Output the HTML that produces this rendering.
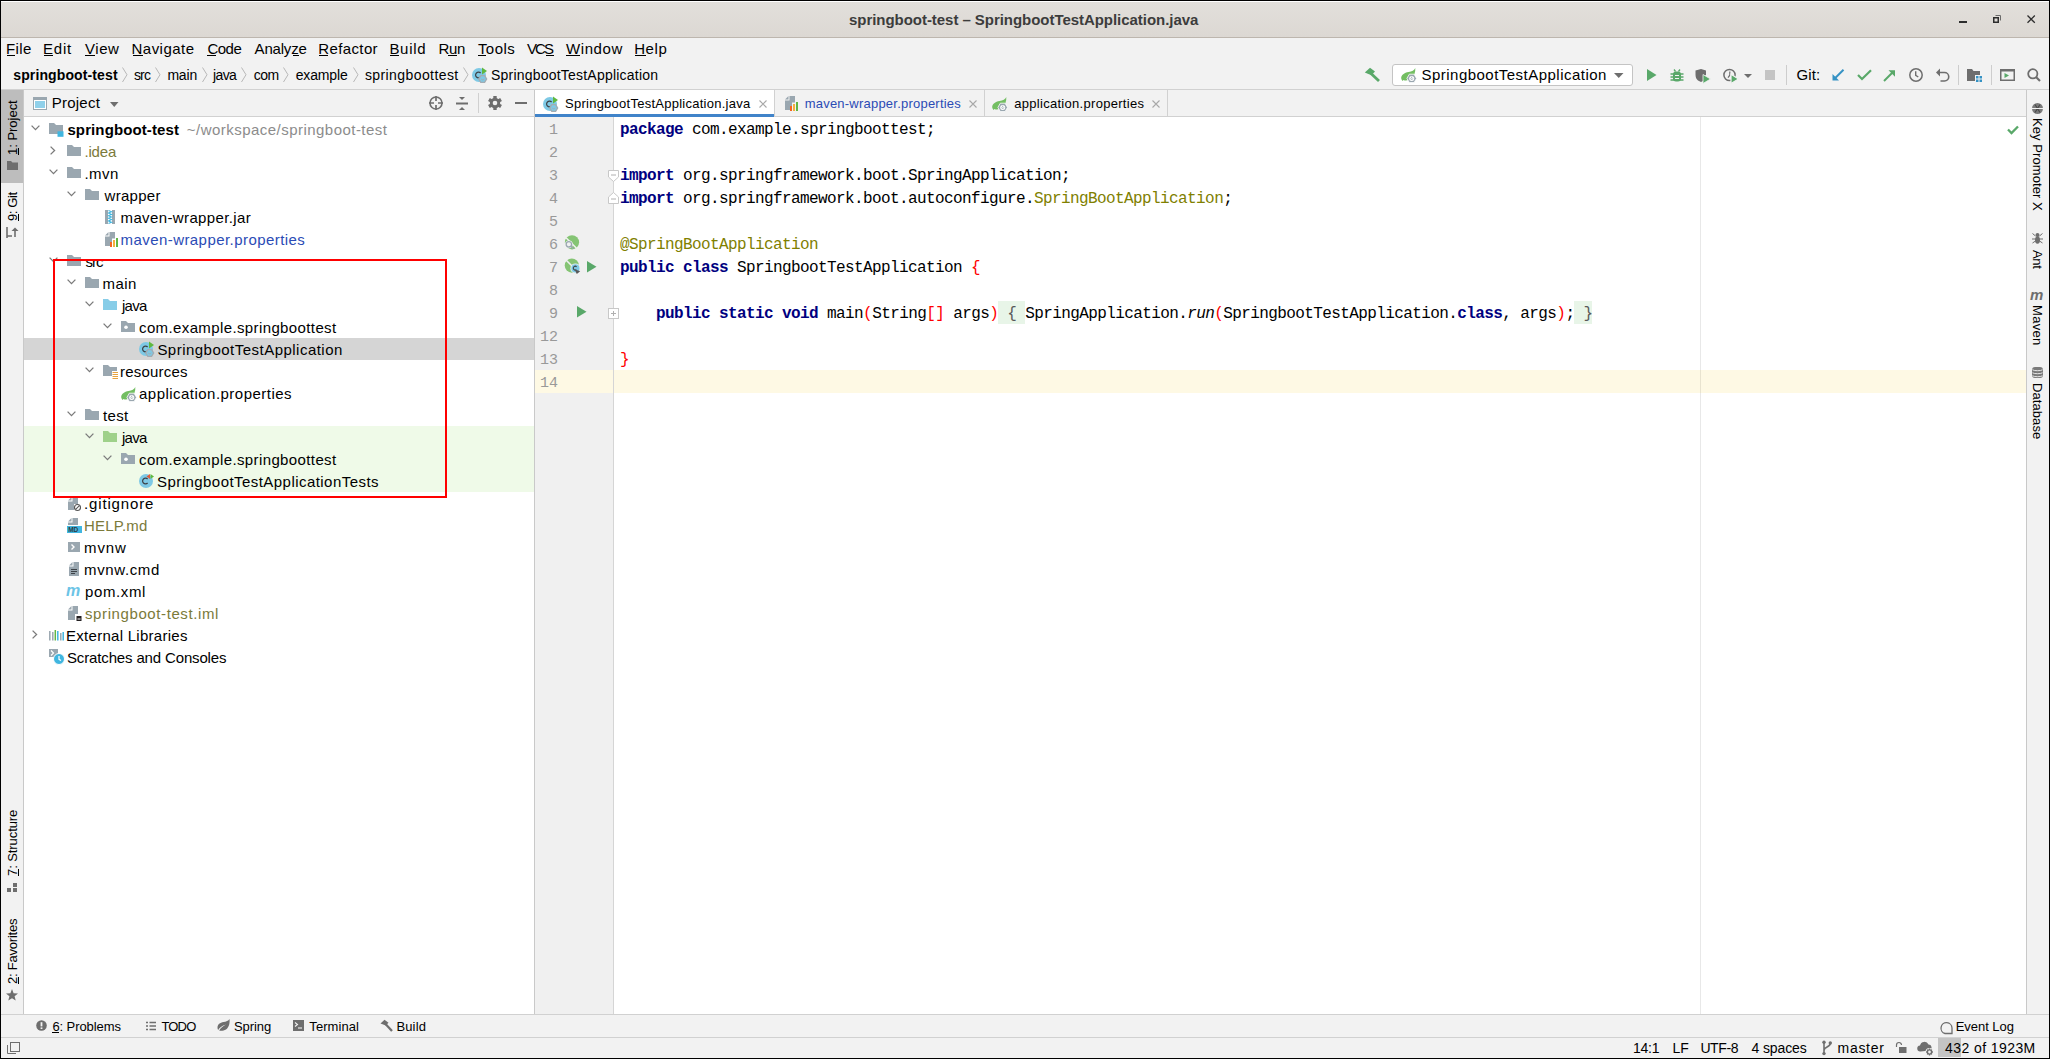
<!DOCTYPE html><html><head><meta charset="utf-8"><style>
html,body{margin:0;padding:0;width:2050px;height:1059px;overflow:hidden;background:#000}
body{position:relative;font-family:"Liberation Sans",sans-serif;}
.r{position:absolute}
.code{position:absolute;white-space:pre;font:16px/1 "Liberation Mono",monospace;letter-spacing:-0.6px;color:#000}
.code b{font-weight:bold}
.t{position:absolute;white-space:pre;line-height:1;font-family:"Liberation Sans",sans-serif;color:#000}
svg{position:absolute;overflow:visible}
</style></head><body>
<div class="r" style="left:0px;top:0px;width:2050px;height:1059px;background:#000;"></div>
<div class="r" style="left:1px;top:1px;width:2048px;height:1px;background:#ffffff;"></div>
<div class="r" style="left:1px;top:2px;width:2048px;height:35px;background:linear-gradient(#e2dfdb,#dcd8d3);"></div>
<div class="r" style="left:1px;top:37px;width:2048px;height:1px;background:#bdb6ae;"></div>
<div class="r" style="left:1px;top:38px;width:2048px;height:52px;background:#f2f2f2;"></div>
<div class="r" style="left:1px;top:89px;width:2048px;height:1px;background:#d1d1d1;"></div>
<div class="r" style="left:1px;top:90px;width:22px;height:925px;background:#f2f2f2;"></div>
<div class="r" style="left:1px;top:90px;width:22px;height:93px;background:#bdbdbd;"></div>
<div class="r" style="left:23px;top:90px;width:1px;height:925px;background:#c9c9c9;"></div>
<div class="r" style="left:24px;top:90px;width:510px;height:26px;background:#f2f2f2;"></div>
<div class="r" style="left:24px;top:116px;width:510px;height:1px;background:#d1d1d1;"></div>
<div class="r" style="left:24px;top:117px;width:510px;height:897px;background:#ffffff;"></div>
<div class="r" style="left:534px;top:90px;width:1px;height:925px;background:#c9c9c9;"></div>
<div class="r" style="left:535px;top:90px;width:1491px;height:26px;background:#f2f2f2;"></div>
<div class="r" style="left:535px;top:116px;width:1491px;height:1px;background:#d1d1d1;"></div>
<div class="r" style="left:535px;top:90px;width:239px;height:26px;background:#ffffff;"></div>
<div class="r" style="left:535px;top:114px;width:239px;height:3px;background:#4083c9;"></div>
<div class="r" style="left:774px;top:90px;width:1px;height:26px;background:#d1d1d1;"></div>
<div class="r" style="left:984px;top:90px;width:1px;height:26px;background:#d1d1d1;"></div>
<div class="r" style="left:1167px;top:90px;width:1px;height:26px;background:#d1d1d1;"></div>
<div class="r" style="left:535px;top:117px;width:1491px;height:897px;background:#ffffff;"></div>
<div class="r" style="left:535px;top:117px;width:78px;height:897px;background:#f0f0f0;"></div>
<div class="r" style="left:613px;top:117px;width:1px;height:897px;background:#d5d5d5;"></div>
<div class="r" style="left:1700px;top:117px;width:1px;height:897px;background:#e8e8e8;"></div>
<div class="r" style="left:2026px;top:90px;width:1px;height:925px;background:#c9c9c9;"></div>
<div class="r" style="left:2027px;top:90px;width:22px;height:925px;background:#f2f2f2;"></div>
<div class="r" style="left:1px;top:1014px;width:2048px;height:1px;background:#d1d1d1;"></div>
<div class="r" style="left:1px;top:1015px;width:2048px;height:22px;background:#f2f2f2;"></div>
<div class="r" style="left:1px;top:1037px;width:2048px;height:1px;background:#d1d1d1;"></div>
<div class="r" style="left:1px;top:1038px;width:2048px;height:20px;background:#f2f2f2;"></div>
<div class="r" style="left:1938px;top:1038px;width:23px;height:19px;background:#c4c4c4;"></div>
<div class="r" style="left:24px;top:338px;width:510px;height:22px;background:#d5d5d5;"></div>
<div class="r" style="left:24px;top:426px;width:510px;height:66px;background:#effae8;"></div>
<div class="r" style="left:535px;top:370px;width:78px;height:23px;background:#fef9e4;"></div>
<div class="r" style="left:614px;top:370px;width:1412px;height:23px;background:#fef9e4;"></div>
<div class="r" style="left:1700px;top:370px;width:1px;height:23px;background:#e8e3cf;"></div>
<svg style="left:31px;top:125px;" width="9" height="6" viewBox="0 0 9 6"><path d="M0.6 0.6L4.5 4.6L8.4 0.6" fill="none" stroke="#7a7a7a" stroke-width="1.3"/></svg>
<svg style="left:49px;top:123px;" width="14" height="11" viewBox="0 0 14 11"><path d="M0 0H5L7 2H14V11H0Z" fill="#9aa7b0"/></svg>
<svg style="left:49px;top:123px;" width="16" height="14" viewBox="0 0 16 14"><path d="M0 0H4.5L6.5 2H14V8H8V11H0Z" fill="#9aa7b0"/><rect x="8.5" y="8.3" width="6" height="5.5" fill="#40b6e0"/></svg>
<svg style="left:50px;top:146px;" width="6" height="9" viewBox="0 0 6 9"><path d="M0.6 0.6L4.6 4.5L0.6 8.4" fill="none" stroke="#7a7a7a" stroke-width="1.3"/></svg>
<svg style="left:67px;top:145px;" width="14" height="11" viewBox="0 0 14 11"><path d="M0 0H5L7 2H14V11H0Z" fill="#9aa7b0"/></svg>
<svg style="left:49px;top:169px;" width="9" height="6" viewBox="0 0 9 6"><path d="M0.6 0.6L4.5 4.6L8.4 0.6" fill="none" stroke="#7a7a7a" stroke-width="1.3"/></svg>
<svg style="left:67px;top:167px;" width="14" height="11" viewBox="0 0 14 11"><path d="M0 0H5L7 2H14V11H0Z" fill="#9aa7b0"/></svg>
<svg style="left:67px;top:191px;" width="9" height="6" viewBox="0 0 9 6"><path d="M0.6 0.6L4.5 4.6L8.4 0.6" fill="none" stroke="#7a7a7a" stroke-width="1.3"/></svg>
<svg style="left:85px;top:189px;" width="14" height="11" viewBox="0 0 14 11"><path d="M0 0H5L7 2H14V11H0Z" fill="#9aa7b0"/></svg>
<svg style="left:105px;top:210px;" width="10" height="14" viewBox="0 0 10 14"><rect x="0" y="0" width="3" height="14" fill="#9aa7b0"/><rect x="7" y="0" width="3" height="14" fill="#9aa7b0"/><path d="M3.5 0.5L6.5 1.8L3.5 3.1L6.5 4.4L3.5 5.7L6.5 7L3.5 8.3L6.5 9.6L3.5 10.9L6.5 12.2L3.5 13.5" fill="none" stroke="#40b6e0" stroke-width="1.1"/></svg>
<svg style="left:105px;top:232px;" width="14" height="15" viewBox="0 0 14 15"><path d="M0 3.5L3.5 0V3.5Z" fill="#9aa7b0"/><path d="M4.5 0H10V6.5H7V14H0V4.5H4.5Z" fill="#9aa7b0"/><rect x="5" y="10" width="2" height="5" fill="#f26522"/><rect x="8" y="8" width="2" height="7" fill="#f4af3d"/><rect x="11" y="6" width="2" height="9" fill="#62b543"/></svg>
<svg style="left:49px;top:257px;" width="9" height="6" viewBox="0 0 9 6"><path d="M0.6 0.6L4.5 4.6L8.4 0.6" fill="none" stroke="#7a7a7a" stroke-width="1.3"/></svg>
<svg style="left:67px;top:255px;" width="14" height="11" viewBox="0 0 14 11"><path d="M0 0H5L7 2H14V11H0Z" fill="#9aa7b0"/></svg>
<svg style="left:67px;top:279px;" width="9" height="6" viewBox="0 0 9 6"><path d="M0.6 0.6L4.5 4.6L8.4 0.6" fill="none" stroke="#7a7a7a" stroke-width="1.3"/></svg>
<svg style="left:85px;top:277px;" width="14" height="11" viewBox="0 0 14 11"><path d="M0 0H5L7 2H14V11H0Z" fill="#9aa7b0"/></svg>
<svg style="left:85px;top:301px;" width="9" height="6" viewBox="0 0 9 6"><path d="M0.6 0.6L4.5 4.6L8.4 0.6" fill="none" stroke="#7a7a7a" stroke-width="1.3"/></svg>
<svg style="left:103px;top:299px;" width="14" height="11" viewBox="0 0 14 11"><path d="M0 0H5L7 2H14V11H0Z" fill="#87cde8"/></svg>
<svg style="left:103px;top:323px;" width="9" height="6" viewBox="0 0 9 6"><path d="M0.6 0.6L4.5 4.6L8.4 0.6" fill="none" stroke="#7a7a7a" stroke-width="1.3"/></svg>
<svg style="left:121px;top:321px;" width="14" height="11" viewBox="0 0 14 11"><path d="M0 0H5L7 2H14V11H0Z" fill="#9aa7b0"/><circle cx="5" cy="6.2" r="1.8" fill="#fff"/></svg>
<svg style="left:139px;top:341px;" width="16" height="16" viewBox="0 0 16 16"><circle cx="7" cy="8" r="7" fill="#7ec9e5"/><path d="M8.6 6.0A2.9 2.9 0 1 0 8.6 10.0" fill="none" stroke="#3d4247" stroke-width="1.25"/><path d="M10 0.5L15 4L10 7.5Z" fill="#5fb83f"/><path d="M8.8 8.6L12.6 8.6L14.6 12L12.6 15.4L8.8 15.4L6.8 12Z" fill="#7ec9e5" stroke="#a3acb3" stroke-width="1.4"/><path d="M9.3 11.8A1.45 1.45 0 0 0 12.1 11.8" fill="none" stroke="#a3acb3" stroke-width="1"/></svg>
<svg style="left:85px;top:367px;" width="9" height="6" viewBox="0 0 9 6"><path d="M0.6 0.6L4.5 4.6L8.4 0.6" fill="none" stroke="#7a7a7a" stroke-width="1.3"/></svg>
<svg style="left:103px;top:365px;" width="16" height="14" viewBox="0 0 16 14"><path d="M0 0H5L7 2H14V6H9V11H0Z" fill="#9aa7b0"/><path d="M9.5 7.5H15M9.5 9.5H15M9.5 11.5H15M9.5 13.5H15" stroke="#e8a33d" stroke-width="1"/></svg>
<svg style="left:121px;top:387px;" width="16" height="15" viewBox="0 0 16 15"><path d="M14.3 0C13.4 2.6 10.8 3.3 7.6 3.9C3.2 4.7 0.2 7 0.2 10.1C0.2 11.3 0.8 12.3 1.5 12.9L2.4 12C3.8 12.7 5.8 12.7 7.3 12.1L11 9.5C13.2 7.5 14.6 4 14.3 0Z" fill="#73be62"/><path d="M8.3 6.2L13.1 6.2L15.5 10.4L13.1 14.6L8.3 14.6L5.9 10.4Z" fill="#9aa7b0" stroke="#fff" stroke-width="0.8"/><circle cx="10.7" cy="10.4" r="2.5" fill="#fff"/><path d="M9.5 10.5A1.25 1.25 0 0 0 11.9 10.5" fill="none" stroke="#9aa7b0" stroke-width="0.9"/><path d="M10.7 8.7V10.2" stroke="#9aa7b0" stroke-width="0.9"/></svg>
<svg style="left:67px;top:411px;" width="9" height="6" viewBox="0 0 9 6"><path d="M0.6 0.6L4.5 4.6L8.4 0.6" fill="none" stroke="#7a7a7a" stroke-width="1.3"/></svg>
<svg style="left:85px;top:409px;" width="14" height="11" viewBox="0 0 14 11"><path d="M0 0H5L7 2H14V11H0Z" fill="#9aa7b0"/></svg>
<svg style="left:85px;top:433px;" width="9" height="6" viewBox="0 0 9 6"><path d="M0.6 0.6L4.5 4.6L8.4 0.6" fill="none" stroke="#7a7a7a" stroke-width="1.3"/></svg>
<svg style="left:103px;top:431px;" width="14" height="11" viewBox="0 0 14 11"><path d="M0 0H5L7 2H14V11H0Z" fill="#9fd18a"/></svg>
<svg style="left:103px;top:455px;" width="9" height="6" viewBox="0 0 9 6"><path d="M0.6 0.6L4.5 4.6L8.4 0.6" fill="none" stroke="#7a7a7a" stroke-width="1.3"/></svg>
<svg style="left:121px;top:453px;" width="14" height="11" viewBox="0 0 14 11"><path d="M0 0H5L7 2H14V11H0Z" fill="#9aa7b0"/><circle cx="5" cy="6.2" r="1.8" fill="#fff"/></svg>
<svg style="left:139px;top:473px;" width="16" height="16" viewBox="0 0 16 16"><circle cx="7" cy="8" r="7" fill="#7ec9e5"/><path d="M8.6 6.0A2.9 2.9 0 1 0 8.6 10.0" fill="none" stroke="#3d4247" stroke-width="1.25"/><path d="M11 1L7.5 3.5L11 6Z" fill="#e05a3a"/><path d="M11.5 1L15 3.5L11.5 6Z" fill="#5fb83f"/></svg>
<svg style="left:68px;top:497px;" width="14" height="15" viewBox="0 0 14 15"><path d="M0 3.5L3.5 0V3.5Z" fill="#9aa7b0"/><path d="M4.5 0H10V7H6V13H0V4.5H4.5Z" fill="#9aa7b0"/><circle cx="9.5" cy="10.5" r="3" fill="#fff" stroke="#555" stroke-width="1.1"/><path d="M7.6 12.4L11.4 8.6" stroke="#555" stroke-width="1.1"/></svg>
<svg style="left:67px;top:518px;" width="16" height="16" viewBox="0 0 16 16"><path d="M1 3.5L4.5 0V3.5Z" fill="#9aa7b0"/><path d="M5.5 0H11V7H1V4.5H5.5Z" fill="#9aa7b0"/><rect x="0" y="8" width="15" height="7" fill="#40b6e0"/><text x="1.2" y="14.2" font-family="Liberation Sans" font-weight="bold" font-size="6.5" fill="#2d3a45">MD</text></svg>
<svg style="left:68px;top:542px;" width="12" height="10" viewBox="0 0 12 10"><rect x="0" y="0" width="12" height="10" fill="#9aa7b0"/><path d="M3.5 2.5L6 5L3.5 7.5" fill="none" stroke="#fff" stroke-width="1.4"/></svg>
<svg style="left:69px;top:562px;" width="11" height="15" viewBox="0 0 11 15"><path d="M0 3.5L3.5 0V3.5Z" fill="#9aa7b0"/><path d="M4.5 0H10V14H0V4.5H4.5Z" fill="#9aa7b0"/><path d="M2 7.5H8M2 9.5H8M2 11.5H6" stroke="#3d4247" stroke-width="1"/></svg>
<svg style="left:66px;top:586px;" width="17" height="11" viewBox="0 0 17 11"><text x="0" y="10" font-family="Liberation Sans" font-weight="bold" font-style="italic" font-size="16" fill="#6cc4e6">m</text></svg>
<svg style="left:68px;top:606px;" width="15" height="17" viewBox="0 0 15 17"><path d="M0 3.5L3.5 0V3.5Z" fill="#9aa7b0"/><path d="M4.5 0H10V8H7V14H0V4.5H4.5Z" fill="#9aa7b0"/><rect x="7.5" y="9" width="6.5" height="7" fill="#fff"/><rect x="8.5" y="10" width="5" height="5" fill="#231f20"/><rect x="9.5" y="12.5" width="3" height="1" fill="#fff"/></svg>
<svg style="left:32px;top:630px;" width="6" height="9" viewBox="0 0 6 9"><path d="M0.6 0.6L4.6 4.5L0.6 8.4" fill="none" stroke="#7a7a7a" stroke-width="1.3"/></svg>
<svg style="left:49px;top:630px;" width="15" height="11" viewBox="0 0 15 11"><path d="M0.8 1V10.5M3.8 2V10.5M11.8 3V10.5" stroke="#9aa7b0" stroke-width="1.5"/><path d="M6.3 0V10.5" stroke="#62b543" stroke-width="1.5"/><path d="M8.8 1V10.5M14.2 2V10.5" stroke="#40b6e0" stroke-width="1.5"/></svg>
<svg style="left:49px;top:649px;" width="16" height="16" viewBox="0 0 16 16"><rect x="0" y="0" width="9" height="8" fill="#9aa7b0"/><path d="M2 1.5L4.5 4L2 6.5" fill="none" stroke="#fff" stroke-width="1.2"/><circle cx="10" cy="10" r="5.5" fill="#40b6e0" stroke="#fff" stroke-width="1"/><path d="M10 7V10.3L12 11.5" fill="none" stroke="#fff" stroke-width="1.2"/></svg>
<div class="r" style="left:998px;top:301px;width:27px;height:23px;background:#e8f5e8;"></div>
<div class="r" style="left:1574px;top:301px;width:18px;height:23px;background:#e8f5e8;"></div>
<div class="code" style="left:620px;top:122px"><b style="color:#000080">package</b> com.example.springboottest;</div>
<div class="code" style="left:500px;width:58px;text-align:right;top:123px;color:#999999;font-size:15px;letter-spacing:0">1</div>
<div class="code" style="left:500px;width:58px;text-align:right;top:146px;color:#999999;font-size:15px;letter-spacing:0">2</div>
<div class="code" style="left:620px;top:168px"><b style="color:#000080">import</b> org.springframework.boot.SpringApplication;</div>
<div class="code" style="left:500px;width:58px;text-align:right;top:169px;color:#999999;font-size:15px;letter-spacing:0">3</div>
<div class="code" style="left:620px;top:191px"><b style="color:#000080">import</b> org.springframework.boot.autoconfigure.<span style="color:#808000">SpringBootApplication</span>;</div>
<div class="code" style="left:500px;width:58px;text-align:right;top:192px;color:#999999;font-size:15px;letter-spacing:0">4</div>
<div class="code" style="left:500px;width:58px;text-align:right;top:215px;color:#999999;font-size:15px;letter-spacing:0">5</div>
<div class="code" style="left:620px;top:237px"><span style="color:#808000">@SpringBootApplication</span></div>
<div class="code" style="left:500px;width:58px;text-align:right;top:238px;color:#999999;font-size:15px;letter-spacing:0">6</div>
<div class="code" style="left:620px;top:260px"><b style="color:#000080">public</b> <b style="color:#000080">class</b> SpringbootTestApplication <span style="color:#ff0000">{</span></div>
<div class="code" style="left:500px;width:58px;text-align:right;top:261px;color:#999999;font-size:15px;letter-spacing:0">7</div>
<div class="code" style="left:500px;width:58px;text-align:right;top:284px;color:#999999;font-size:15px;letter-spacing:0">8</div>
<div class="code" style="left:620px;top:306px">    <b style="color:#000080">public</b> <b style="color:#000080">static</b> <b style="color:#000080">void</b> main<span style="color:#ff0000">(</span>String<span style="color:#ff0000">[]</span> args<span style="color:#ff0000">)</span> <span style="color:#595959">{</span> SpringApplication.<i>run</i><span style="color:#ff0000">(</span>SpringbootTestApplication.<b style="color:#000080">class</b>, args<span style="color:#ff0000">)</span>; <span style="color:#595959">}</span></div>
<div class="code" style="left:500px;width:58px;text-align:right;top:307px;color:#999999;font-size:15px;letter-spacing:0">9</div>
<div class="code" style="left:500px;width:58px;text-align:right;top:330px;color:#999999;font-size:15px;letter-spacing:0">12</div>
<div class="code" style="left:620px;top:352px"><span style="color:#ff0000">}</span></div>
<div class="code" style="left:500px;width:58px;text-align:right;top:353px;color:#999999;font-size:15px;letter-spacing:0">13</div>
<div class="code" style="left:500px;width:58px;text-align:right;top:376px;color:#999999;font-size:15px;letter-spacing:0">14</div>
<svg style="left:608px;top:170px;" width="11" height="12" viewBox="0 0 11 12"><path d="M0.5 0.5H10.5V7L5.5 11.5L0.5 7Z" fill="#fff" stroke="#c8c8c8" stroke-width="1"/><path d="M3 5H8" stroke="#b0b0b0" stroke-width="1"/></svg>
<svg style="left:608px;top:192px;" width="11" height="12" viewBox="0 0 11 12"><path d="M0.5 11.5H10.5V5L5.5 0.5L0.5 5Z" fill="#fff" stroke="#c8c8c8" stroke-width="1"/><path d="M3 7H8" stroke="#b0b0b0" stroke-width="1"/></svg>
<svg style="left:608px;top:308px;" width="11" height="11" viewBox="0 0 11 11"><rect x="0.5" y="0.5" width="10" height="10" fill="#fff" stroke="#c8c8c8" stroke-width="1"/><path d="M3 5.5H8M5.5 3V8" stroke="#b0b0b0" stroke-width="1"/></svg>
<svg style="left:565px;top:235px;" width="16" height="17" viewBox="0 0 16 17"><circle cx="7" cy="7.3" r="7.1" fill="#85c474"/><path d="M0 1.8L13 14.8" stroke="#f0f0f0" stroke-width="1.6"/><circle cx="3.9" cy="9.3" r="3.9" fill="#f0f0f0"/><circle cx="3.9" cy="9.3" r="2.7" fill="none" stroke="#9aa7b0" stroke-width="1.3"/><path d="M5.9 11.3L8.3 13.7" stroke="#9aa7b0" stroke-width="1.5"/></svg>
<svg style="left:565px;top:258px;" width="16" height="17" viewBox="0 0 16 17"><circle cx="6.8" cy="7.6" r="7.1" fill="#85c474"/><path d="M0.5 1.5L10 11" stroke="#f0f0f0" stroke-width="1.6"/><circle cx="10.4" cy="10.4" r="5" fill="#f0f0f0"/><circle cx="10.4" cy="10.4" r="4.1" fill="#7ec9e5"/><path d="M11.6 8.8A1.9 1.9 0 1 0 11.4 11.6" fill="none" stroke="#3d4247" stroke-width="1.1"/><path d="M9.6 11.2L15.2 13.2L11.8 16Z" fill="#595959"/></svg>
<svg style="left:587px;top:261px;" width="10" height="12" viewBox="0 0 10 12"><path d="M0 0L9.5 5.75L0 11.5Z" fill="#59a869"/></svg>
<svg style="left:577px;top:306px;" width="10" height="12" viewBox="0 0 10 12"><path d="M0 0L9.5 5.75L0 11.5Z" fill="#59a869"/></svg>
<svg style="left:2007px;top:125px;" width="12" height="10" viewBox="0 0 12 10"><path d="M1 4.5L4.5 8L11 1.5" fill="none" stroke="#59a869" stroke-width="2.3"/></svg>
<div class="r" style="left:1959px;top:20.7px;width:8px;height:2px;background:#2d2d2d;"></div>
<svg style="left:1993px;top:15px;" width="9" height="9" viewBox="0 0 9 9"><rect x="0.75" y="2.75" width="4.5" height="4.5" fill="none" stroke="#2d2d2d" stroke-width="1.5"/><path d="M2.5 0.5H7.5V5.5" fill="none" stroke="#6a6a6a" stroke-width="1"/></svg>
<svg style="left:2027px;top:15px;" width="9" height="9" viewBox="0 0 9 9"><path d="M0.5 0.5L7.8 7.8M7.8 0.5L0.5 7.8" stroke="#2d2d2d" stroke-width="1.3"/></svg>
<div class="r" style="left:7px;top:55px;width:8px;height:1px;background:#000;"></div>
<div class="r" style="left:44px;top:55px;width:9px;height:1px;background:#000;"></div>
<div class="r" style="left:85px;top:55px;width:10px;height:1px;background:#000;"></div>
<div class="r" style="left:132.5px;top:55px;width:10px;height:1px;background:#000;"></div>
<div class="r" style="left:207.4px;top:55px;width:8.6px;height:1px;background:#000;"></div>
<div class="r" style="left:292.5px;top:55px;width:6.2px;height:1px;background:#000;"></div>
<div class="r" style="left:319.3px;top:55px;width:8.3px;height:1px;background:#000;"></div>
<div class="r" style="left:390.4px;top:55px;width:9px;height:1px;background:#000;"></div>
<div class="r" style="left:448.4px;top:55px;width:8.2px;height:1px;background:#000;"></div>
<div class="r" style="left:477.9px;top:55px;width:7.9px;height:1px;background:#000;"></div>
<div class="r" style="left:546px;top:55px;width:7.7px;height:1px;background:#000;"></div>
<div class="r" style="left:566px;top:55px;width:13.7px;height:1px;background:#000;"></div>
<div class="r" style="left:635.2px;top:55px;width:10.4px;height:1px;background:#000;"></div>
<svg style="left:122px;top:67px;" width="6" height="16" viewBox="0 0 6 16"><path d="M0.5 0.5L5 7.75L0.5 15" fill="none" stroke="#b8b8b8" stroke-width="1"/></svg>
<svg style="left:155px;top:67px;" width="6" height="16" viewBox="0 0 6 16"><path d="M0.5 0.5L5 7.75L0.5 15" fill="none" stroke="#b8b8b8" stroke-width="1"/></svg>
<svg style="left:201.5px;top:67px;" width="6" height="16" viewBox="0 0 6 16"><path d="M0.5 0.5L5 7.75L0.5 15" fill="none" stroke="#b8b8b8" stroke-width="1"/></svg>
<svg style="left:241px;top:67px;" width="6" height="16" viewBox="0 0 6 16"><path d="M0.5 0.5L5 7.75L0.5 15" fill="none" stroke="#b8b8b8" stroke-width="1"/></svg>
<svg style="left:283.3px;top:67px;" width="6" height="16" viewBox="0 0 6 16"><path d="M0.5 0.5L5 7.75L0.5 15" fill="none" stroke="#b8b8b8" stroke-width="1"/></svg>
<svg style="left:353px;top:67px;" width="6" height="16" viewBox="0 0 6 16"><path d="M0.5 0.5L5 7.75L0.5 15" fill="none" stroke="#b8b8b8" stroke-width="1"/></svg>
<svg style="left:463px;top:67px;" width="6" height="16" viewBox="0 0 6 16"><path d="M0.5 0.5L5 7.75L0.5 15" fill="none" stroke="#b8b8b8" stroke-width="1"/></svg>
<svg style="left:472px;top:67px;" width="16" height="16" viewBox="0 0 16 16"><circle cx="7" cy="8" r="7" fill="#7ec9e5"/><path d="M8.6 6.0A2.9 2.9 0 1 0 8.6 10.0" fill="none" stroke="#3d4247" stroke-width="1.25"/><path d="M10 0.5L15 4L10 7.5Z" fill="#5fb83f"/><path d="M8.8 8.6L12.6 8.6L14.6 12L12.6 15.4L8.8 15.4L6.8 12Z" fill="#7ec9e5" stroke="#a3acb3" stroke-width="1.4"/><path d="M9.3 11.8A1.45 1.45 0 0 0 12.1 11.8" fill="none" stroke="#a3acb3" stroke-width="1"/></svg>
<svg style="left:1364px;top:67px;" width="17" height="15" viewBox="0 0 17 15"><path d="M0.8 5.6L6 0.8L11 4.6L7.4 8.2Z" fill="#59a869"/><path d="M7 6.4L15 14" stroke="#59a869" stroke-width="2.8"/></svg>
<div class="r" style="left:1392px;top:64px;width:241px;height:22px;background:#ffffff;border:1px solid #c4c4c4;border-radius:3px;box-sizing:border-box"></div>
<svg style="left:1401px;top:68px;" width="16" height="15" viewBox="0 0 16 15"><path d="M14.3 0C13.4 2.6 10.8 3.3 7.6 3.9C3.2 4.7 0.2 7 0.2 10.1C0.2 11.3 0.8 12.3 1.5 12.9L2.4 12C3.8 12.7 5.8 12.7 7.3 12.1L11 9.5C13.2 7.5 14.6 4 14.3 0Z" fill="#73be62"/><path d="M8.3 6.2L13.1 6.2L15.5 10.4L13.1 14.6L8.3 14.6L5.9 10.4Z" fill="#9aa7b0" stroke="#fff" stroke-width="0.8"/><circle cx="10.7" cy="10.4" r="2.5" fill="#fff"/><path d="M9.5 10.5A1.25 1.25 0 0 0 11.9 10.5" fill="none" stroke="#9aa7b0" stroke-width="0.9"/><path d="M10.7 8.7V10.2" stroke="#9aa7b0" stroke-width="0.9"/></svg>
<svg style="left:1614px;top:73px;" width="10" height="6" viewBox="0 0 10 6"><path d="M0 0H9.5L4.75 5Z" fill="#6e6e6e"/></svg>
<svg style="left:1647px;top:69px;" width="10" height="12" viewBox="0 0 10 12"><path d="M0 0L9.5 6L0 12Z" fill="#59a869"/></svg>
<svg style="left:1670px;top:68px;" width="14" height="14" viewBox="0 0 14 14"><path d="M4 1.5L5.5 3.5M10 1.5L8.5 3.5" stroke="#59a869" stroke-width="1.3"/><rect x="3" y="3.5" width="8" height="10" rx="3" fill="#59a869"/><path d="M0.5 6H13.5M0.5 9H13.5M0.5 12H13.5" stroke="#59a869" stroke-width="1.4"/><path d="M5 7.5H9M5 10.5H9" stroke="#f2f2f2" stroke-width="1.2"/></svg>
<svg style="left:1695px;top:69px;" width="16" height="15" viewBox="0 0 16 15"><path d="M0.5 1.5L6 0L11 1.5V6L9 7V11.5L6 13L3 11.5C1.2 10 0.5 8 0.5 5.5Z" fill="#6e6e6e"/><path d="M8 5.5L15.5 10L8 14.5Z" fill="#59a869" stroke="#f2f2f2" stroke-width="0.8"/></svg>
<svg style="left:1723px;top:68px;" width="16" height="15" viewBox="0 0 16 15"><circle cx="6.5" cy="7" r="5.6" fill="none" stroke="#6e6e6e" stroke-width="1.5"/><path d="M6.8 3.6V7.2L5 9.6" fill="none" stroke="#6e6e6e" stroke-width="1.2"/><path d="M8 6.3L15.5 11L8 15.5Z" fill="#59a869" stroke="#f2f2f2" stroke-width="1.2"/></svg>
<svg style="left:1744px;top:74px;" width="8" height="4" viewBox="0 0 8 4"><path d="M0 0H8L4 4Z" fill="#6e6e6e"/></svg>
<div class="r" style="left:1765px;top:70px;width:10px;height:10px;background:#c4c4c4;"></div>
<div class="r" style="left:1786px;top:65px;width:1px;height:20px;background:#cdcdcd;"></div>
<svg style="left:1832px;top:69px;" width="13" height="12" viewBox="0 0 13 12"><path d="M11.5 0.8L2.5 9.8" stroke="#3592c4" stroke-width="2"/><path d="M0.5 5V11.5H7Z" fill="#3592c4"/></svg>
<svg style="left:1857px;top:69px;" width="15" height="12" viewBox="0 0 15 12"><path d="M1 6L5 10L14 1.2" fill="none" stroke="#59a869" stroke-width="2.2"/></svg>
<svg style="left:1883px;top:69px;" width="13" height="13" viewBox="0 0 13 13"><path d="M1 12L10.5 2.5" stroke="#59a869" stroke-width="2"/><path d="M5.5 1.2H12V7.7Z" fill="#59a869"/></svg>
<svg style="left:1909px;top:68px;" width="15" height="15" viewBox="0 0 15 15"><circle cx="7" cy="7" r="6.2" fill="none" stroke="#6e6e6e" stroke-width="1.5"/><path d="M6.7 3.2V7.3L9.3 9" fill="none" stroke="#6e6e6e" stroke-width="1.4"/></svg>
<svg style="left:1936px;top:68px;" width="14" height="14" viewBox="0 0 14 14"><path d="M3.5 4.5H8.5A4.2 4.2 0 0 1 8.5 13H4.5" fill="none" stroke="#6e6e6e" stroke-width="1.6"/><path d="M0 4.5L4 0.5V8.5Z" fill="#6e6e6e"/></svg>
<div class="r" style="left:1958px;top:65px;width:1px;height:20px;background:#cdcdcd;"></div>
<svg style="left:1967px;top:69px;" width="16" height="14" viewBox="0 0 16 14"><path d="M0 0H5L6.5 2H13V6H8V12H0Z" fill="#6e6e6e"/><rect x="9" y="7" width="2.5" height="2.5" fill="#3592c4"/><rect x="12.5" y="7" width="2.5" height="2.5" fill="#3592c4"/><rect x="9" y="10.5" width="2.5" height="2.5" fill="#3592c4"/><rect x="12.5" y="10.5" width="2.5" height="2.5" fill="#3592c4"/></svg>
<div class="r" style="left:1991px;top:65px;width:1px;height:20px;background:#cdcdcd;"></div>
<svg style="left:2000px;top:69px;" width="15" height="12" viewBox="0 0 15 12"><rect x="0.75" y="0.75" width="13.5" height="10.5" fill="none" stroke="#6e6e6e" stroke-width="1.5"/><rect x="0" y="0" width="15" height="2.5" fill="#6e6e6e"/><path d="M4.5 4L9 6.5L4.5 9Z" fill="#59a869"/></svg>
<svg style="left:2027px;top:68px;" width="14" height="14" viewBox="0 0 14 14"><circle cx="5.8" cy="5.8" r="4.6" fill="none" stroke="#6e6e6e" stroke-width="1.8"/><path d="M9 9L13 13" stroke="#6e6e6e" stroke-width="2.2"/></svg>
<svg style="left:33px;top:97px;" width="14" height="13" viewBox="0 0 14 13"><rect x="0" y="0" width="14" height="13" fill="#9aa7b0"/><rect x="1" y="3" width="12" height="9" fill="#fff"/><rect x="2" y="4" width="10" height="7" fill="#8fd0ea"/></svg>
<svg style="left:110px;top:102px;" width="9" height="5" viewBox="0 0 9 5"><path d="M0 0H8.5L4.25 5Z" fill="#6e6e6e"/></svg>
<svg style="left:429px;top:96px;" width="14" height="14" viewBox="0 0 14 14"><circle cx="7" cy="7" r="6" fill="none" stroke="#6e6e6e" stroke-width="1.6"/><path d="M7 0V5M7 9V14M0 7H5M9 7H14" stroke="#6e6e6e" stroke-width="1.7"/></svg>
<svg style="left:456px;top:97px;" width="12" height="13" viewBox="0 0 12 13"><path d="M3 0H9L6 3Z" fill="#6e6e6e"/><rect x="0" y="5.5" width="12" height="2" fill="#6e6e6e"/><path d="M3 13H9L6 10Z" fill="#6e6e6e"/></svg>
<div class="r" style="left:478px;top:93px;width:1px;height:20px;background:#d0d0d0;"></div>
<svg style="left:488px;top:96px;" width="14" height="14" viewBox="0 0 14 14"><circle cx="7" cy="7" r="5.2" fill="#6e6e6e"/><rect x="5.3" y="0" width="3.4" height="3.5" fill="#6e6e6e" transform="rotate(0 7 7)"/><rect x="5.3" y="0" width="3.4" height="3.5" fill="#6e6e6e" transform="rotate(60 7 7)"/><rect x="5.3" y="0" width="3.4" height="3.5" fill="#6e6e6e" transform="rotate(120 7 7)"/><rect x="5.3" y="0" width="3.4" height="3.5" fill="#6e6e6e" transform="rotate(180 7 7)"/><rect x="5.3" y="0" width="3.4" height="3.5" fill="#6e6e6e" transform="rotate(240 7 7)"/><rect x="5.3" y="0" width="3.4" height="3.5" fill="#6e6e6e" transform="rotate(300 7 7)"/><circle cx="7" cy="7" r="2.3" fill="#f2f2f2"/></svg>
<div class="r" style="left:515px;top:102px;width:12px;height:2px;background:#6e6e6e;"></div>
<svg style="left:543px;top:96px;" width="16" height="16" viewBox="0 0 16 16"><circle cx="7" cy="8" r="7" fill="#7ec9e5"/><path d="M8.6 6.0A2.9 2.9 0 1 0 8.6 10.0" fill="none" stroke="#3d4247" stroke-width="1.25"/><path d="M10 0.5L15 4L10 7.5Z" fill="#5fb83f"/><path d="M8.8 8.6L12.6 8.6L14.6 12L12.6 15.4L8.8 15.4L6.8 12Z" fill="#7ec9e5" stroke="#a3acb3" stroke-width="1.4"/><path d="M9.3 11.8A1.45 1.45 0 0 0 12.1 11.8" fill="none" stroke="#a3acb3" stroke-width="1"/></svg>
<svg style="left:785px;top:96px;" width="15" height="15" viewBox="0 0 15 15"><path d="M0 3.5L3.5 0V3.5Z" fill="#9aa7b0"/><path d="M4.5 0H10V6.5H7V14H0V4.5H4.5Z" fill="#9aa7b0"/><rect x="5" y="10" width="2" height="5" fill="#f26522"/><rect x="8" y="8" width="2" height="7" fill="#f4af3d"/><rect x="11" y="6" width="2" height="9" fill="#62b543"/></svg>
<svg style="left:992px;top:97px;" width="16" height="15" viewBox="0 0 16 15"><path d="M14.3 0C13.4 2.6 10.8 3.3 7.6 3.9C3.2 4.7 0.2 7 0.2 10.1C0.2 11.3 0.8 12.3 1.5 12.9L2.4 12C3.8 12.7 5.8 12.7 7.3 12.1L11 9.5C13.2 7.5 14.6 4 14.3 0Z" fill="#73be62"/><path d="M8.3 6.2L13.1 6.2L15.5 10.4L13.1 14.6L8.3 14.6L5.9 10.4Z" fill="#9aa7b0" stroke="#fff" stroke-width="0.8"/><circle cx="10.7" cy="10.4" r="2.5" fill="#fff"/><path d="M9.5 10.5A1.25 1.25 0 0 0 11.9 10.5" fill="none" stroke="#9aa7b0" stroke-width="0.9"/><path d="M10.7 8.7V10.2" stroke="#9aa7b0" stroke-width="0.9"/></svg>
<svg style="left:759px;top:99.5px;" width="8" height="8" viewBox="0 0 8 8"><path d="M0.5 0.5L7.5 7.5M7.5 0.5L0.5 7.5" stroke="#a8a8a8" stroke-width="1.1"/></svg>
<svg style="left:969px;top:99.5px;" width="8" height="8" viewBox="0 0 8 8"><path d="M0.5 0.5L7.5 7.5M7.5 0.5L0.5 7.5" stroke="#a8a8a8" stroke-width="1.1"/></svg>
<svg style="left:1152px;top:99.5px;" width="8" height="8" viewBox="0 0 8 8"><path d="M0.5 0.5L7.5 7.5M7.5 0.5L0.5 7.5" stroke="#a8a8a8" stroke-width="1.1"/></svg>
<svg style="left:7px;top:161px;" width="11" height="9" viewBox="0 0 11 9"><path d="M0 0H4L5.5 1.5H11V9H0Z" fill="#6e6e6e"/></svg>
<svg style="left:6px;top:227px;" width="12" height="11" viewBox="0 0 12 11"><path d="M1 0V11M1 9H6" fill="none" stroke="#6e6e6e" stroke-width="1.6"/><path d="M9 10V3" stroke="#6e6e6e" stroke-width="1.6"/><path d="M5.5 4L9 0.5L12.5 4Z" fill="#6e6e6e"/></svg>
<svg style="left:7px;top:883px;" width="11" height="9" viewBox="0 0 11 9"><rect x="0" y="5" width="4" height="4" fill="#6e6e6e"/><rect x="6" y="5" width="4" height="4" fill="#6e6e6e"/><rect x="6" y="0" width="4" height="4" fill="#6e6e6e"/></svg>
<svg style="left:6px;top:989px;" width="12" height="12" viewBox="0 0 12 12"><path d="M6 0L7.6 4.2L12 4.4L8.6 7.2L9.7 11.6L6 9.2L2.3 11.6L3.4 7.2L0 4.4L4.4 4.2Z" fill="#6e6e6e"/></svg>
<div class="r" style="left:18px;top:148px;width:1px;height:7px;background:#000;"></div>
<div class="r" style="left:18px;top:214px;width:1px;height:7px;background:#000;"></div>
<div class="r" style="left:18px;top:869px;width:1px;height:7px;background:#000;"></div>
<div class="r" style="left:18px;top:977px;width:1px;height:7px;background:#000;"></div>
<svg style="left:2032px;top:103px;" width="11" height="11" viewBox="0 0 11 11"><circle cx="5.5" cy="5.5" r="5.5" fill="#7a7a7a"/><path d="M3 1.5L8 9.5M8 1.5L3 9.5" stroke="#4a4a4a" stroke-width="1.2"/><path d="M0 5.5H11" stroke="#f2f2f2" stroke-width="1"/></svg>
<svg style="left:2032px;top:232px;" width="11" height="12" viewBox="0 0 11 12"><ellipse cx="5.5" cy="8" rx="2.5" ry="3.8" fill="#6e6e6e"/><circle cx="5.5" cy="3" r="2" fill="#6e6e6e"/><path d="M0.5 1.5L3.5 4M10.5 1.5L7.5 4M0 7H11M0.5 11L3.5 9M10.5 11L7.5 9" stroke="#6e6e6e" stroke-width="1"/></svg>
<svg style="left:2030px;top:289px;" width="14" height="12" viewBox="0 0 14 12"><text x="0" y="10.5" font-family="Liberation Sans" font-weight="bold" font-style="italic" font-size="15" fill="#6e6e6e">m</text></svg>
<svg style="left:2032px;top:366px;" width="11" height="13" viewBox="0 0 11 13"><rect x="0" y="1" width="11" height="11" rx="3" fill="#7a7a7a"/><path d="M0.5 3.8C2 5 9 5 10.5 3.8M0.5 6.8C2 8 9 8 10.5 6.8M0.5 9.8C2 11 9 11 10.5 9.8" fill="none" stroke="#f2f2f2" stroke-width="0.9"/></svg>
<svg style="left:36px;top:1020px;" width="11" height="11" viewBox="0 0 11 11"><circle cx="5.5" cy="5.5" r="5.3" fill="#6e6e6e"/><rect x="4.6" y="2.2" width="1.8" height="4.2" fill="#f2f2f2"/><rect x="4.6" y="7.4" width="1.8" height="1.6" fill="#f2f2f2"/></svg>
<div class="r" style="left:52px;top:1032px;width:7px;height:1px;background:#000;"></div>
<svg style="left:146px;top:1021px;" width="10" height="11" viewBox="0 0 10 11"><path d="M0 1.5H2M0 5H2M0 8.5H2M3.5 1.5H10M3.5 5H10M3.5 8.5H10" stroke="#6e6e6e" stroke-width="1.6"/></svg>
<svg style="left:217px;top:1019px;" width="13" height="12" viewBox="0 0 13 12"><path d="M12.5 0C11.5 2 9 2.6 6.5 3C3 3.6 0.5 5.5 0.5 8.5C0.5 9.5 0.8 10.5 1.2 11C2 9 5 6.5 9 5.5C6 7 3.5 9 2.2 11.6C4 12 7 11.8 9 10.5C12 8.5 13 4 12.5 0Z" fill="#6e6e6e"/></svg>
<svg style="left:293px;top:1020px;" width="11" height="11" viewBox="0 0 11 11"><rect x="0" y="0" width="11" height="11" fill="#6e6e6e"/><path d="M2 2.5L4.5 4.5L2 6.5" fill="none" stroke="#f2f2f2" stroke-width="1.1"/><path d="M5 8H9" stroke="#f2f2f2" stroke-width="1.1"/></svg>
<svg style="left:380px;top:1019px;" width="13" height="14" viewBox="0 0 13 14"><path d="M0.5 4.5L4.5 0.8L8.5 3.8L5.8 6.5Z" fill="#6e6e6e"/><path d="M5.5 5L12 12" stroke="#6e6e6e" stroke-width="2.3"/></svg>
<svg style="left:1939px;top:1021px;" width="14" height="13" viewBox="0 0 14 13"><path d="M13 12.5H6A5.5 5.5 0 1 1 13 7Z" fill="none" stroke="#6e6e6e" stroke-width="1.3"/></svg>
<svg style="left:7px;top:1042px;" width="13" height="12" viewBox="0 0 13 12"><rect x="3.5" y="0.5" width="9" height="9" fill="none" stroke="#6e6e6e" stroke-width="1"/><path d="M0.5 3V11.5H9" fill="none" stroke="#6e6e6e" stroke-width="1"/></svg>
<svg style="left:1821px;top:1040px;" width="12" height="16" viewBox="0 0 12 16"><path d="M3 2.5V13.5M9.3 3.2C9.3 7.5 3 6.5 3 10.5" fill="none" stroke="#6e6e6e" stroke-width="1.6"/><circle cx="3" cy="2.3" r="1.7" fill="#6e6e6e"/><circle cx="3" cy="13.6" r="1.7" fill="#6e6e6e"/><circle cx="9.3" cy="3" r="1.7" fill="#6e6e6e"/></svg>
<svg style="left:1895px;top:1042px;" width="12" height="11" viewBox="0 0 12 11"><path d="M1.5 5V3A2.5 2.5 0 0 1 6.5 3" fill="none" stroke="#6e6e6e" stroke-width="1.2"/><rect x="4" y="5" width="7.5" height="6" fill="#6e6e6e"/></svg>
<svg style="left:1917px;top:1041px;" width="17" height="15" viewBox="0 0 17 15"><path d="M3.5 10.5A3 3 0 0 1 3 4.5A4.5 4.5 0 0 1 11.5 3.5A3.2 3.2 0 0 1 13 9.5Z" fill="#6e6e6e"/><circle cx="12.5" cy="11" r="4" fill="#f2f2f2"/><circle cx="12.5" cy="11" r="2.1" fill="none" stroke="#6e6e6e" stroke-width="1.4"/><path d="M12.5 7.6V9M12.5 13V14.4M9.1 11H10.5M14.5 11H15.9M10.1 8.6L11 9.5M14 12.5L14.9 13.4M14.9 8.6L14 9.5M11 12.5L10.1 13.4" stroke="#6e6e6e" stroke-width="1.3"/></svg>
<div class="t" style="left:849.00px;top:12px;font-size:15px;font-weight:bold;color:#3c3c3c;letter-spacing:-0.044px;">springboot-test – SpringbootTestApplication.java</div>
<div class="t" style="left:6.00px;top:41px;font-size:15px;letter-spacing:0.391px;">File</div>
<div class="t" style="left:43.00px;top:41px;font-size:15px;letter-spacing:0.773px;">Edit</div>
<div class="t" style="left:85.00px;top:41px;font-size:15px;letter-spacing:0.530px;">View</div>
<div class="t" style="left:131.50px;top:41px;font-size:15px;letter-spacing:0.477px;">Navigate</div>
<div class="t" style="left:207.40px;top:41px;font-size:15px;letter-spacing:-0.506px;">Code</div>
<div class="t" style="left:254.60px;top:41px;font-size:15px;letter-spacing:-0.187px;">Analyze</div>
<div class="t" style="left:318.30px;top:41px;font-size:15px;letter-spacing:0.372px;">Refactor</div>
<div class="t" style="left:389.40px;top:41px;font-size:15px;letter-spacing:0.697px;">Build</div>
<div class="t" style="left:438.50px;top:41px;font-size:15px;letter-spacing:-0.387px;">Run</div>
<div class="t" style="left:477.90px;top:41px;font-size:15px;letter-spacing:0.471px;">Tools</div>
<div class="t" style="left:527.00px;top:41px;font-size:15px;letter-spacing:-1.919px;">VCS</div>
<div class="t" style="left:566.00px;top:41px;font-size:15px;letter-spacing:0.597px;">Window</div>
<div class="t" style="left:634.20px;top:41px;font-size:15px;letter-spacing:0.598px;">Help</div>
<div class="t" style="left:13.30px;top:68px;font-size:14px;font-weight:bold;letter-spacing:0.115px;">springboot-test</div>
<div class="t" style="left:133.90px;top:68px;font-size:14px;letter-spacing:-0.781px;">src</div>
<div class="t" style="left:167.40px;top:68px;font-size:14px;letter-spacing:-0.186px;">main</div>
<div class="t" style="left:213.00px;top:68px;font-size:14px;letter-spacing:-0.632px;">java</div>
<div class="t" style="left:253.80px;top:68px;font-size:14px;letter-spacing:-0.543px;">com</div>
<div class="t" style="left:295.70px;top:68px;font-size:14px;letter-spacing:-0.138px;">example</div>
<div class="t" style="left:364.90px;top:68px;font-size:14px;letter-spacing:0.411px;">springboottest</div>
<div class="t" style="left:491.00px;top:68px;font-size:14px;letter-spacing:0.213px;">SpringbootTestApplication</div>
<div class="t" style="left:1421.50px;top:67px;font-size:15px;letter-spacing:0.475px;">SpringbootTestApplication</div>
<div class="t" style="left:1796.50px;top:67px;font-size:15px;letter-spacing:0.111px;">Git:</div>
<div class="t" style="left:51.70px;top:95px;font-size:15px;letter-spacing:0.247px;">Project</div>
<div class="t" style="left:565.00px;top:97px;font-size:13px;letter-spacing:0.257px;">SpringbootTestApplication.java</div>
<div class="t" style="left:804.70px;top:97px;font-size:13px;color:#2b4bb5;letter-spacing:0.221px;">maven-wrapper.properties</div>
<div class="t" style="left:1014.20px;top:97px;font-size:13px;letter-spacing:0.296px;">application.properties</div>
<div class="t" style="left:67.40px;top:122px;font-size:15px;font-weight:bold;letter-spacing:0.115px;">springboot-test</div>
<div class="t" style="left:84.40px;top:144px;font-size:15px;color:#7b7a3a;letter-spacing:-0.146px;">.idea</div>
<div class="t" style="left:84.40px;top:166px;font-size:15px;letter-spacing:0.479px;">.mvn</div>
<div class="t" style="left:104.50px;top:188px;font-size:15px;letter-spacing:0.301px;">wrapper</div>
<div class="t" style="left:120.50px;top:210px;font-size:15px;letter-spacing:0.380px;">maven-wrapper.jar</div>
<div class="t" style="left:120.50px;top:232px;font-size:15px;color:#2b4bb5;letter-spacing:0.437px;">maven-wrapper.properties</div>
<div class="t" style="left:85.40px;top:254px;font-size:15px;letter-spacing:-0.948px;">src</div>
<div class="t" style="left:102.60px;top:276px;font-size:15px;letter-spacing:0.443px;">main</div>
<div class="t" style="left:122.00px;top:298px;font-size:15px;letter-spacing:-0.725px;">java</div>
<div class="t" style="left:139.00px;top:320px;font-size:15px;letter-spacing:0.383px;">com.example.springboottest</div>
<div class="t" style="left:157.40px;top:342px;font-size:15px;letter-spacing:0.479px;">SpringbootTestApplication</div>
<div class="t" style="left:120.00px;top:364px;font-size:15px;letter-spacing:0.205px;">resources</div>
<div class="t" style="left:139.00px;top:386px;font-size:15px;letter-spacing:0.472px;">application.properties</div>
<div class="t" style="left:103.00px;top:408px;font-size:15px;letter-spacing:0.330px;">test</div>
<div class="t" style="left:122.00px;top:430px;font-size:15px;letter-spacing:-0.725px;">java</div>
<div class="t" style="left:139.00px;top:452px;font-size:15px;letter-spacing:0.383px;">com.example.springboottest</div>
<div class="t" style="left:157.00px;top:474px;font-size:15px;letter-spacing:0.450px;">SpringbootTestApplicationTests</div>
<div class="t" style="left:84.00px;top:496px;font-size:15px;letter-spacing:0.848px;">.gitignore</div>
<div class="t" style="left:84.00px;top:518px;font-size:15px;color:#7b7a3a;letter-spacing:0.181px;">HELP.md</div>
<div class="t" style="left:84.00px;top:540px;font-size:15px;letter-spacing:0.888px;">mvnw</div>
<div class="t" style="left:84.00px;top:562px;font-size:15px;letter-spacing:0.642px;">mvnw.cmd</div>
<div class="t" style="left:85.00px;top:584px;font-size:15px;letter-spacing:0.610px;">pom.xml</div>
<div class="t" style="left:85.00px;top:606px;font-size:15px;color:#7b7a3a;letter-spacing:0.599px;">springboot-test.iml</div>
<div class="t" style="left:66.00px;top:628px;font-size:15px;letter-spacing:0.281px;">External Libraries</div>
<div class="t" style="left:67.00px;top:650px;font-size:15px;letter-spacing:-0.147px;">Scratches and Consoles</div>
<div class="t" style="left:186.80px;top:122px;font-size:15px;color:#8c8c8c;letter-spacing:0.467px;">~/workspace/springboot-test</div>
<div class="t" style="left:52.40px;top:1020px;font-size:13px;letter-spacing:-0.086px;">6: Problems</div>
<div class="t" style="left:161.40px;top:1020px;font-size:13px;letter-spacing:-0.802px;">TODO</div>
<div class="t" style="left:234.00px;top:1020px;font-size:13px;letter-spacing:-0.070px;">Spring</div>
<div class="t" style="left:309.30px;top:1020px;font-size:13px;letter-spacing:0.081px;">Terminal</div>
<div class="t" style="left:396.40px;top:1020px;font-size:13px;letter-spacing:0.156px;">Build</div>
<div class="t" style="left:1955.70px;top:1020px;font-size:13px;letter-spacing:-0.039px;">Event Log</div>
<div class="t" style="left:1633.00px;top:1041px;font-size:14px;letter-spacing:-0.254px;">14:1</div>
<div class="t" style="left:1672.50px;top:1041px;font-size:14px;letter-spacing:-0.086px;">LF</div>
<div class="t" style="left:1700.40px;top:1041px;font-size:14px;letter-spacing:-0.394px;">UTF-8</div>
<div class="t" style="left:1751.40px;top:1041px;font-size:14px;letter-spacing:-0.091px;">4 spaces</div>
<div class="t" style="left:1837.50px;top:1041px;font-size:14px;letter-spacing:0.715px;">master</div>
<div class="t" style="left:1945.00px;top:1041px;font-size:14px;letter-spacing:0.422px;">432 of 1923M</div>
<div class="t" style="left:6.00px;top:154.50px;font-size:13px;transform-origin:0 0;transform:rotate(-90deg);letter-spacing:-0.022px;">1: Project</div>
<div class="t" style="left:6.00px;top:221.00px;font-size:13px;transform-origin:0 0;transform:rotate(-90deg);letter-spacing:-0.391px;">9: Git</div>
<div class="t" style="left:6.00px;top:876.40px;font-size:13px;transform-origin:0 0;transform:rotate(-90deg);letter-spacing:-0.079px;">7: Structure</div>
<div class="t" style="left:6.00px;top:984.30px;font-size:13px;transform-origin:0 0;transform:rotate(-90deg);letter-spacing:-0.219px;">2: Favorites</div>
<div class="t" style="left:2044.00px;top:117.60px;font-size:13px;transform-origin:0 0;transform:rotate(90deg);letter-spacing:0.078px;">Key Promoter X</div>
<div class="t" style="left:2044.00px;top:249.70px;font-size:13px;transform-origin:0 0;transform:rotate(90deg);letter-spacing:-0.300px;">Ant</div>
<div class="t" style="left:2044.00px;top:305.00px;font-size:13px;transform-origin:0 0;transform:rotate(90deg);letter-spacing:0.303px;">Maven</div>
<div class="t" style="left:2044.00px;top:383.00px;font-size:13px;transform-origin:0 0;transform:rotate(90deg);letter-spacing:0.083px;">Database</div>
<div class="r" style="left:53px;top:259px;width:390px;height:235px;border:2px solid #ff0000"></div>
</body></html>
